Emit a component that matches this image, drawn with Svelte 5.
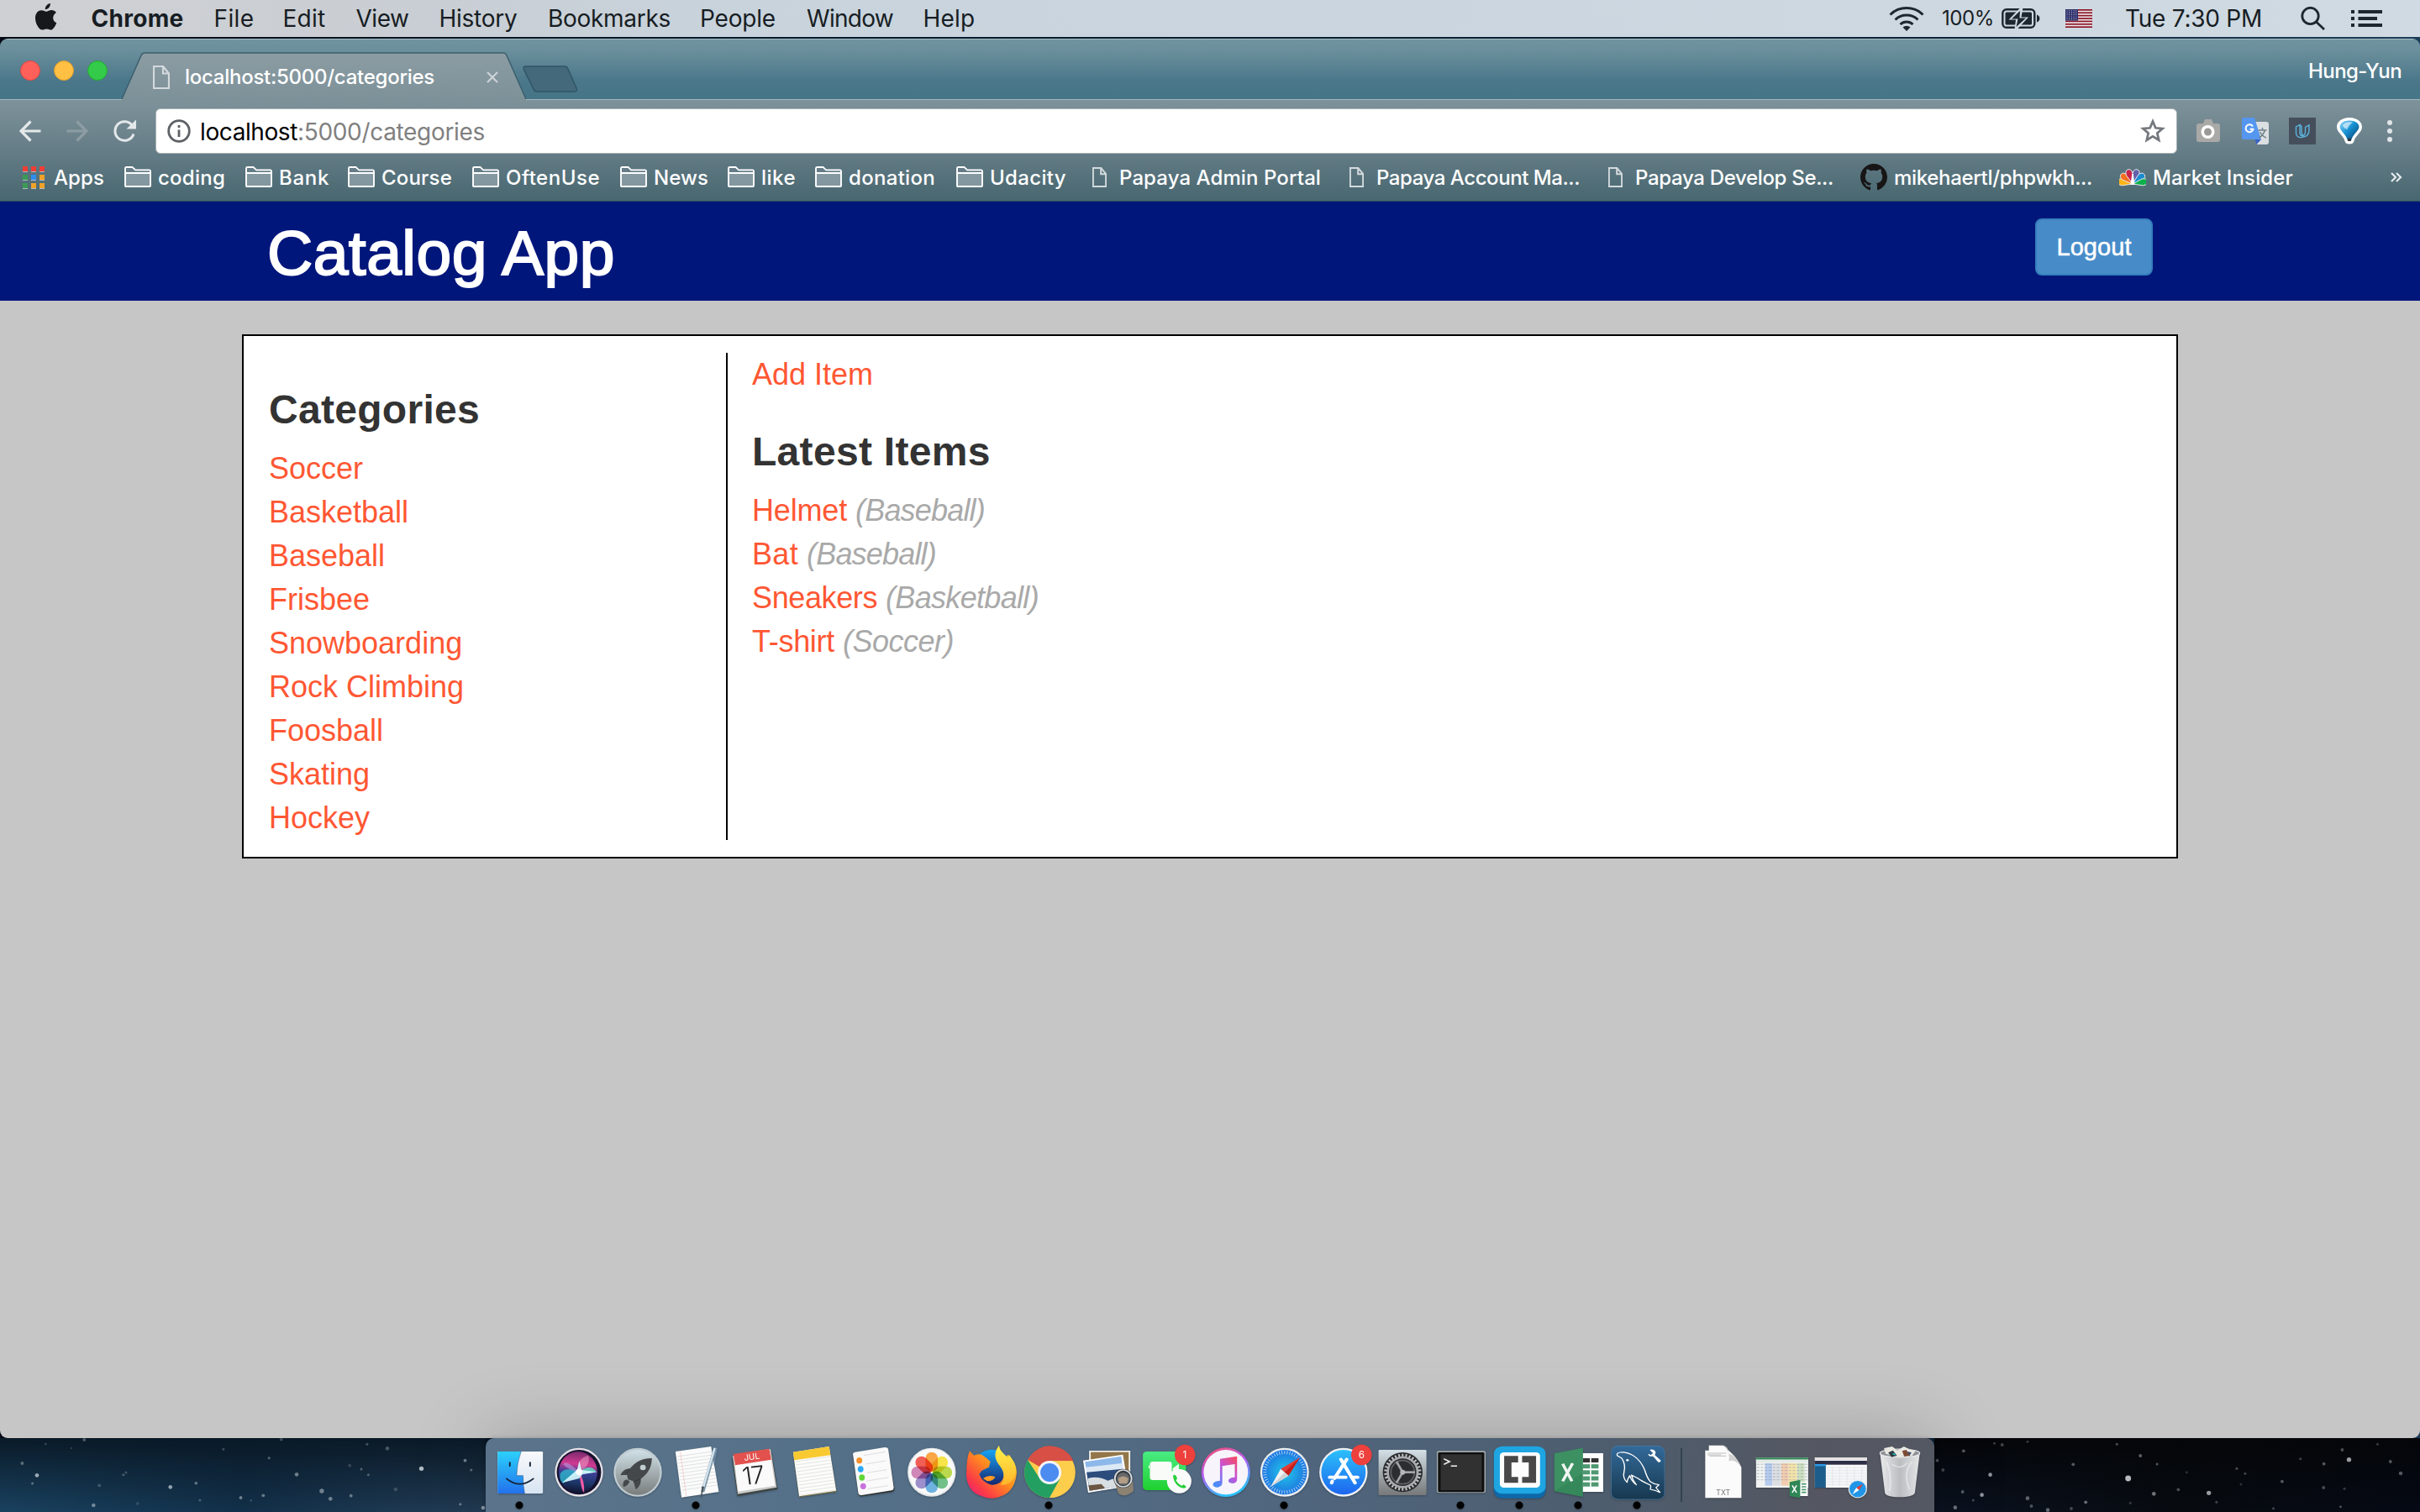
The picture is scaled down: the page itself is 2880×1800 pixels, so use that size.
<script>
  // Tightens or loosens tracking so a label takes exactly the given width.
  function fit(node, width) {
    const natural = node.getBoundingClientRect().width;
    const count = node.textContent.length;
    node.style.letterSpacing = (width - natural) / count + 'px';
  }

  const menus = [
    { label: 'File', fit: 48, slot: 82 },
    { label: 'Edit', fit: 51, slot: 87 },
    { label: 'View', fit: 63, slot: 99 },
    { label: 'History', fit: 93, slot: 129.5 },
    { label: 'Bookmarks', fit: 146, slot: 181 },
    { label: 'People', fit: 90, slot: 127 },
    { label: 'Window', fit: 103, slot: 138.5 },
    { label: 'Help', fit: 62, slot: 80 }
  ];

  const bookmarks = [
    { kind: 'apps', label: 'Apps', fit: 60, slot: 124 },
    { kind: 'folder', label: 'coding', fit: 80, slot: 144 },
    { kind: 'folder', label: 'Bank', fit: 60, slot: 122 },
    { kind: 'folder', label: 'Course', fit: 84, slot: 148 },
    { kind: 'folder', label: 'OftenUse', fit: 112, slot: 176 },
    { kind: 'folder', label: 'News', fit: 65, slot: 128 },
    { kind: 'folder', label: 'like', fit: 41, slot: 104 },
    { kind: 'folder', label: 'donation', fit: 103, slot: 168 },
    { kind: 'folder', label: 'Udacity', fit: 91, slot: 154 },
    { kind: 'doc', label: 'Papaya Admin Portal', fit: 240, slot: 306 },
    { kind: 'doc', label: 'Papaya Account Ma...', fit: 242, slot: 308 },
    { kind: 'doc', label: 'Papaya Develop Se...', fit: 236, slot: 308 },
    { kind: 'github', label: 'mikehaertl/phpwkh...', fit: 236, slot: 308 },
    { kind: 'nbc', label: 'Market Insider', fit: 167, slot: 220 }
  ];

  const categories = ['Soccer', 'Basketball', 'Baseball', 'Frisbee', 'Snowboarding', 'Rock Climbing', 'Foosball', 'Skating', 'Hockey'];
  const items = [
    { name: 'Helmet', nameFit: 113, category: 'Baseball', fit: 154 },
    { name: 'Bat', nameFit: 55, category: 'Baseball', fit: 154 },
    { name: 'Sneakers', nameFit: 149, category: 'Basketball', fit: 182 },
    { name: 'T-shirt', nameFit: 98, category: 'Soccer', fit: 132 }
  ];

  const leftStars = [
    [69, 306, 5, 0.4], [115, 349, 6, 0.75], [101, 378, 4, 0.4], [142, 237, 4, 0.2], [262, 222, 5, 0.35], [222, 252, 3, 0.2],
    [291, 456, 6, 0.5], [309, 385, 5, 0.25], [384, 347, 4, 0.3], [392, 339, 4, 0.25], [530, 391, 6, 0.7], [610, 377, 5, 0.4],
    [622, 438, 4, 0.3], [695, 256, 4, 0.25], [749, 429, 5, 0.5], [781, 439, 3, 0.3], [819, 421, 5, 0.45], [837, 287, 4, 0.4],
    [875, 221, 5, 0.25], [923, 346, 6, 0.5], [1001, 405, 7, 0.5], [1028, 433, 6, 0.5], [1092, 422, 5, 0.45], [1088, 314, 5, 0.2],
    [1124, 327, 4, 0.35], [1146, 347, 4, 0.35], [1142, 238, 4, 0.3], [1205, 253, 6, 0.3], [1231, 399, 6, 0.2], [1311, 325, 7, 0.85],
    [1447, 296, 5, 0.5], [1466, 330, 4, 0.4], [1432, 452, 4, 0.45], [1503, 465, 6, 0.6], [428, 450, 5, 0.15]
  ];
  const rightStars = [
    [66, 296, 5, 0.35], [84, 330, 5, 0.3], [148, 262, 5, 0.4], [244, 235, 4, 0.25], [268, 240, 5, 0.3], [347, 229, 4, 0.25],
    [231, 347, 6, 0.7], [205, 419, 6, 0.7], [145, 408, 5, 0.4], [178, 438, 4, 0.3], [122, 464, 6, 0.5], [347, 431, 6, 0.45],
    [359, 459, 5, 0.35], [410, 473, 6, 0.45], [489, 310, 5, 0.4], [528, 445, 5, 0.5], [483, 468, 5, 0.3], [625, 238, 4, 0.35],
    [660, 360, 9, 0.9], [698, 279, 5, 0.45], [750, 309, 4, 0.4], [740, 415, 6, 0.55], [816, 400, 5, 0.35], [842, 338, 4, 0.2],
    [911, 412, 7, 0.75], [935, 445, 4, 0.3], [998, 325, 4, 0.35], [1024, 343, 4, 0.3], [1011, 381, 4, 0.2], [1139, 371, 5, 0.4],
    [1112, 467, 4, 0.3], [1196, 290, 4, 0.3], [1269, 308, 5, 0.4], [1268, 393, 5, 0.35], [1326, 258, 5, 0.35], [1347, 293, 7, 0.75],
    [1333, 397, 4, 0.25], [1321, 461, 4, 0.35], [1436, 238, 4, 0.25], [1476, 300, 5, 0.4], [1508, 342, 6, 0.4], [667, 448, 4, 0.25]
  ];

  const petals = ['#f79a2c', '#f5e12e', '#b3d334', '#5cb878', '#5aa7dc', '#8f7fc4', '#c978ae', '#f0483e'];
  const ticks = Array.from({ length: 48 }, (_, i) => i * 7.5);
  const teeth = Array.from({ length: 30 }, (_, i) => i * 12);
  const rules = Array.from({ length: 11 }, (_, i) => i * 12);
</script>

{#snippet docIcon(cls)}
  <svg class={cls} viewBox="0 0 20 28"><path d="M1 1H12L19 9.500V27H1Z M12 1V9.500H19" /></svg>
{/snippet}

<div class="screen">
  <header class="menubar">
    <svg class="apple" viewBox="0 0 26 32">
      <path d="M17.900 0C18.200 3.800 15 7.400 11.800 7.200 11.400 3.700 14.700.400 17.900 0ZM25.300 23.300C23.500 27.800 21 31.600 18.600 31.600 16.800 31.600 16 30.500 13.500 30.500 11 30.500 10 31.600 8.500 31.600 4.500 31.600 0 24 0 17.400 0 11.400 3.800 8.200 7.400 8.200 9.800 8.200 11.500 9.700 13.200 9.700 14.700 9.700 16.800 8 19.600 8 21.200 8 23.500 8.900 24.900 10.900 19.600 14.200 20.300 21.100 25.300 23.300Z" />
    </svg>
    <div class="appname"><b use:fit={110}>Chrome</b></div>
    {#each menus as m}
      <div class="menu" style:width="{m.slot}px"><span use:fit={m.fit}>{m.label}</span></div>
    {/each}
    <div class="status">
      <svg class="wifi" viewBox="0 0 42 30">
        <g fill="none" stroke="#1c2730" stroke-width="3">
          <path d="M1.500 10.500A28 28 0 0 1 40.500 10.500" /><path d="M7.500 16.500A19.500 19.500 0 0 1 34.500 16.500" /><path d="M13.500 22A11 11 0 0 1 28.500 22" />
        </g>
        <path d="M16.500 25.500A6.500 6.500 0 0 1 25.500 25.500L21 30Z" />
      </svg>
      <div class="percent"><span use:fit={62}>100%</span></div>
      <svg class="battery" viewBox="0 0 46 26">
        <rect x="1.300" y="2.300" width="38" height="21.500" rx="4.500" fill="none" stroke="#1c2730" stroke-width="2.400" />
        <rect x="4.500" y="5.500" width="31.500" height="15" rx="1.500" />
        <path d="M42 8.500C46.500 10 46.500 16 42 17.500Z" />
        <path d="M22.500 0L8.500 14.500H17L15.500 26H18.500L32 11.500H23.500L25.500 0Z" fill="#cfd9e2" />
        <path d="M22 4L12 13.500H19.500L17.500 23L29 12.500H21.500Z" />
      </svg>
      <svg class="flag" viewBox="0 0 32 22">
        <rect width="32" height="22" fill="#e8e8ea" />
        {#each [0, 1, 2, 3, 4, 5, 6] as s}<rect y={s * 3.385} width="32" height="1.700" fill="#8d1426" />{/each}
        <rect width="15" height="13.500" fill="#2c2f69" />
        {#each [0, 1, 2, 3, 4] as r}{#each [0, 1, 2, 3, 4] as c}<circle cx={2 + c * 2.700} cy={1.800 + r * 2.400} r="0.600" fill="#c9cbe4" />{/each}{/each}
      </svg>
      <div class="clock"><span use:fit={163}>Tue 7:30 PM</span></div>
      <svg class="search" viewBox="0 0 30 28"><circle cx="11.500" cy="11" r="9.700" /><path d="M18.500 18L28 27" /></svg>
      <svg class="list" viewBox="0 0 37 20">
        <path d="M0 0H4V4H0ZM8.500 0H37V4H8.500ZM0 8H4V12H0ZM8.500 8H31V12H8.500ZM0 16H4V20H0ZM8.500 16H37V20H8.500Z" />
      </svg>
    </div>
  </header>

  <div class="window">
    <div class="tabstrip">
      <div class="lights"><i class="red"></i><i class="yellow"></i><i class="green"></i></div>
      <div class="tab">
        <svg class="tabshape" viewBox="0 0 484 57" preserveAspectRatio="none">
          <defs>
            <linearGradient id="tabfill" x1="0" y1="0" x2="0" y2="1"><stop offset="0" stop-color="#8c9ca3" /><stop offset="1" stop-color="#7d9199" /></linearGradient>
          </defs>
          <path d="M1 57L24 4Q25.500 1 28 1H455Q458 1 459 4L482 57Z" fill="url(#tabfill)" />
          <path d="M1 56L24 4Q25.500 1 28 1H455Q458 1 459 4L482 56" fill="none" stroke="#3b5f6e" stroke-width="1.500" />
        </svg>
        {@render docIcon('tabdoc')}
        <div class="tabtitle"><span use:fit={297}>localhost:5000/categories</span></div>
        <svg class="close" viewBox="0 0 14 14"><path d="M1 1L13 13M13 1L1 13" /></svg>
      </div>
      <svg class="newtab" viewBox="0 0 66 32">
        <path d="M4 1H50Q53 1 54 4L64 27Q65.500 31 62 31H17Q14 31 13 28L1.500 5Q0 1 4 1Z" fill="#44697a" stroke="#2f5566" stroke-width="1.500" />
      </svg>
      <div class="profile"><span use:fit={111}>Hung-Yun</span></div>
    </div>

    <div class="toolbar">
      <div class="navrow">
        <svg class="nav" viewBox="0 0 26 26"><path d="M25.500 13H2M13.500 1.500L2 13L13.500 24.500" /></svg>
        <svg class="nav dim" viewBox="0 0 26 26"><path d="M.500 13H24M12.500 1.500L24 13L12.500 24.500" /></svg>
        <svg class="reload" viewBox="0 0 28 28"><path d="M23.500 7.500A11.300 11.300 0 1 0 25 17.500" fill="none" stroke="#e4e8ea" stroke-width="3" /><path d="M28 .500V11.500H16.500Z" fill="#e4e8ea" /></svg>
        <div class="omnibox">
          <svg class="info" viewBox="0 0 28 28"><circle cx="14" cy="14" r="12.300" /><path d="M14 12.500V21M14 7V10" /></svg>
          <div class="url"><span use:fit={116}>localhost</span><span class="path" use:fit={223}>:5000/categories</span></div>
          <svg class="star" viewBox="0 0 30 29"><path d="M15 3.500L18.300 11.300L26.600 12L20.300 17.500L22.200 25.700L15 21.300L7.800 25.700L9.700 17.500L3.400 12L11.700 11.300Z" /></svg>
        </div>
        <svg class="camera" viewBox="0 0 30 28">
          <path d="M9 5L11 0H19L21 5H26Q29 5 29 8V24Q29 27 26 27H4Q1 27 1 24V8Q1 5 4 5Z" fill="#a9a9a7" />
          <circle cx="14.500" cy="15" r="8" fill="#fff" /><circle cx="14.500" cy="15" r="4.500" fill="#9a9a98" />
        </svg>
        <svg class="ext" viewBox="0 0 32 32">
          <path d="M14 5H29Q32 5 32 8V29Q32 32 29 32H18Z" fill="#dcdfe2" />
          <path d="M0 2Q0 0 2 0H15L23 26H2Q0 26 0 24Z" fill="#5596ef" />
          <path d="M15.500 26H23L17.500 32Z" fill="#3b62c0" />
          <path d="M13 10.500A4.500 4.500 0 1 0 13.500 13.800H9.500" fill="none" stroke="#fff" stroke-width="2" />
          <path d="M19.500 15H29.500M24.500 12V15M27.500 15Q25.500 21 20.500 24M21.500 17Q24 22 29 24" fill="none" stroke="#6f8088" stroke-width="1.500" />
        </svg>
        <svg class="ext" viewBox="0 0 32 32">
          <rect width="32" height="32" fill="#454f5b" />
          <path d="M13 8.500L8.500 11V18.500C8.500 22 11.500 24 15 23.500C21.500 23 24 19 24 15V9L19.500 11.500V17C19.500 20 18 21.500 16 21.500C14 21.500 13 20 13 18ZM17 22C15 20.500 15 19 15 16V10.500L13 8.500" fill="none" stroke="#5db3dc" stroke-width="1.400" />
        </svg>
        <svg class="balloon" viewBox="0 0 32 32">
          <defs><linearGradient id="bal" x1="0" y1="0" x2="1" y2="1"><stop offset="0" stop-color="#9adcfa" /><stop offset=".45" stop-color="#1791d4" /><stop offset="1" stop-color="#073c66" /></linearGradient></defs>
          <path d="M16 0C25 0 31 5 31 11C31 18 23 21 21.500 28Q20.500 31.500 16 31.500Q11.500 31.500 10.500 28C9 21 1 18 1 11C1 5 7 0 16 0Z" fill="#fff" />
          <path d="M16 3.500C23 3.500 27.500 7 27.500 11C27 16.500 20 19.500 18 27.500H14C12 19.500 5 16.500 4.500 11C4.500 7 9 3.500 16 3.500Z" fill="url(#bal)" />
          <path d="M8 9Q12 4 20 5.500Q15 9 13.500 14Q9 13 8 9Z" fill="#fff" opacity=".6" />
          <rect x="14" y="24.500" width="4" height="3.500" fill="#2a3b45" />
        </svg>
        <svg class="dots" viewBox="0 0 6 26"><circle cx="3" cy="3" r="3" /><circle cx="3" cy="13" r="3" /><circle cx="3" cy="23" r="3" /></svg>
      </div>

      <div class="bookmarks">
        {#each bookmarks as b}
          <div class="bookmark" style:width="{b.slot}px">
            {#if b.kind === 'apps'}
              <svg viewBox="0 0 32 32">
                {#each ['#ef3e36', '#ef3e36', '#ef3e36', '#3b9a55', '#2f8cf0', '#f0a228', '#3b9a55', '#f0a228', '#f0a228'] as c, i}
                  <rect x={3 + (i % 3) * 10} y={3 + Math.floor(i / 3) * 10} width="6" height="6" fill={c} />
                  <rect x={3 + (i % 3) * 10} y={9 + Math.floor(i / 3) * 10} width="6" height="0.900" fill="#b9c5c9" />
                {/each}
              </svg>
            {:else if b.kind === 'folder'}
              <svg viewBox="0 0 32 32"><path d="M1 26V5.500Q1 4 2.500 4H9.500L13 7.500H29.500Q31 7.500 31 9V26Q31 27 30 27H2Q1 27 1 26ZM1 11H31" fill="rgba(180,192,200,.5)" stroke="#fff" stroke-width="1.900" /><path d="M2 5H9L13 8.500H30V10H2Z" fill="#667d88" /></svg>
            {:else if b.kind === 'doc'}
              <div class="docbox">{@render docIcon('smalldoc')}</div>
            {:else if b.kind === 'github'}
              <svg viewBox="0 0 16 16"><path fill="#171515" d="M8 0C3.580 0 0 3.580 0 8c0 3.540 2.290 6.530 5.470 7.590.400.070.550-.170.550-.380 0-.190-.010-.820-.010-1.490-2.010.370-2.530-.490-2.690-.940-.090-.230-.480-.940-.820-1.130-.280-.150-.680-.520-.010-.530.630-.010 1.080.580 1.230.820.720 1.210 1.870.870 2.330.660.070-.520.280-.870.510-1.070-1.780-.200-3.640-.890-3.640-3.950 0-.870.310-1.590.820-2.150-.080-.200-.360-1.020.080-2.120 0 0 .670-.210 2.200.820.640-.180 1.320-.270 2-.270s1.360.090 2 .270c1.530-1.040 2.200-.820 2.200-.820.440 1.100.160 1.920.080 2.120.510.560.820 1.270.820 2.150 0 3.070-1.870 3.750-3.650 3.950.290.250.540.730.540 1.480 0 1.070-.010 1.930-.010 2.200 0 .210.150.460.550.380A8.010 8.010 0 0 0 16 8c0-4.420-3.580-8-8-8Z" /></svg>
            {:else}
              <svg viewBox="0 0 32 32">
                {#each [['#fbb515', -80], ['#f36f21', -50], ['#c8234a', -18], ['#6560aa', 18], ['#1c8bd0', 50], ['#0db14b', 80]] as [c, a]}
                  <path d="M16 24L12 12Q12 6 16 6Q20 6 20 12Z" fill={c} stroke="#e8eef0" stroke-width=".9" transform="rotate({a} 16 24)" />
                {/each}
                <path d="M15.200 12L13.500 25H18.500L16.800 12Z" fill="#fff" />
              </svg>
            {/if}
            <span use:fit={b.fit}>{b.label}</span>
          </div>
        {/each}
        <svg class="more" viewBox="0 0 14 12"><path d="M1 1L6 6L1 11M7 1L12 6L7 11" /></svg>
      </div>
    </div>

    <div class="page">
      <div class="pagehead">
        <h1><span use:fit={414}>Catalog App</span></h1>
        <button><span use:fit={89}>Logout</span></button>
      </div>
      <div class="panel">
        <section class="left">
          <h2>Categories</h2>
          {#each categories as c}<a class="row">{c}</a>{/each}
        </section>
        <section class="right">
          <a class="row">Add Item</a>
          <h2>Latest Items</h2>
          {#each items as it}
            <div class="row item"><a use:fit={it.nameFit}>{it.name}</a><em use:fit={it.fit}>({it.category})</em></div>
          {/each}
        </section>
      </div>
    </div>
  </div>

  <footer class="desktop">
    <svg class="sky skyleft" viewBox="0 216 1511 264" preserveAspectRatio="none">
      {#each leftStars as [x, y, r, o]}<ellipse cx={x} cy={y} rx={r} ry={r * 1.150} fill="#cdd6dc" opacity={o} />{/each}
    </svg>
    <div class="dock">
      <svg class="ic run" viewBox="36.600 51 182.930 216" preserveAspectRatio="none">
        <defs>
          <linearGradient id="fb" x1="0" y1="0" x2="0" y2="1"><stop offset="0" stop-color="#2bd0fb" /><stop offset="1" stop-color="#2371ec" /></linearGradient>
          <linearGradient id="fw" x1="0" y1="0" x2="0" y2="1"><stop offset="0" stop-color="#f8f9fb" /><stop offset="1" stop-color="#d8e4f2" /></linearGradient>
        </defs>
        <rect x="58" y="84" width="141" height="150" rx="4" fill="url(#fw)" />
        <path d="M62 84H131Q118 125 117 170H137Q137 205 142 234H62Q58 234 58 230V88Q58 84 62 84Z" fill="url(#fb)" />
        <path d="M131 84Q118 125 117 170H137Q137 205 142 234" fill="none" stroke="#1b4d86" stroke-width="1.500" />
        <path d="M96 123V136M159 123V136M86 181Q127 219 169 181" fill="none" stroke="#14243a" stroke-width="5" stroke-linecap="round" />
      </svg>
      <svg class="ic" viewBox="219.500 51 182.930 216" preserveAspectRatio="none">
        <defs><linearGradient id="si" x1=".5" y1="0" x2=".4" y2="1"><stop offset="0" stop-color="#7b2a6e" /><stop offset=".3" stop-color="#d03a90" /><stop offset=".5" stop-color="#3b3f94" /><stop offset=".75" stop-color="#1c3668" /><stop offset="1" stop-color="#12132e" /></linearGradient></defs>
        <ellipse cx="311" cy="158" rx="75" ry="87" fill="#e6e2e8" /><ellipse cx="311" cy="158" rx="69" ry="80" fill="#15122e" /><ellipse cx="308" cy="158" rx="60" ry="74" fill="url(#si)" />
        <path d="M312 158Q265 135 252 165Q250 190 262 197Z" fill="#2fc6d6" opacity=".7" /><path d="M312 158Q345 125 366 157Q345 165 312 158Z" fill="#5ef0c8" opacity=".75" />
        <path d="M312 158Q300 110 340 98Q350 130 312 158Z" fill="#f7a2c9" opacity=".5" /><path d="M312 158Q270 110 262 130Q275 150 312 158Z" fill="#bcaaf0" opacity=".5" />
        <path d="M312 158Q330 190 327 230Q318 225 312 158Z" fill="#f05aa4" /><path d="M258 196L305 150L312 118L319 150L366 157L322 166L312 180Z" fill="#d8fbff" opacity=".9" /><ellipse cx="311" cy="157" rx="10" ry="11" fill="#fff" />
      </svg>
      <svg class="ic" viewBox="402.500 51 182.930 216" preserveAspectRatio="none">
        <defs><linearGradient id="rk" x1="0" y1="0" x2="0" y2="1"><stop offset="0" stop-color="#cfe0e6" /><stop offset="1" stop-color="#7a7d7c" /></linearGradient></defs>
        <ellipse cx="494" cy="158" rx="75" ry="87" fill="#c0ccd2" /><ellipse cx="494" cy="159" rx="69" ry="80" fill="url(#rk)" />
        <path d="M538 108C512 108 488 118 470 145C456 145 446 153 440 169L460 167L464 184L480 190L488 220C500 208 505 196 503 182C525 164 537 142 538 108Z" fill="#44484a" />
        <ellipse cx="510" cy="141" rx="9" ry="10" fill="#c1cdd0" /><path d="M460 184Q445 188 449 210Q462 208 469 191Z" fill="#44484a" /><path d="M470 145L455 168M503 182L480 192" stroke="#2e3234" stroke-width="2" />
      </svg>
      <svg class="ic run" viewBox="585.400 51 182.930 216" preserveAspectRatio="none">
        <path d="M611 84L722 66L746 228L630 248Z" fill="#fbfbfb" />
        <g stroke="#c6cacd" stroke-width="1.500">{#each rules as r}<path d="M{615 + r * 0.130} {102 + r}L{726 + r * 0.130} {84 + r}" />{/each}</g>
        <path d="M626 83L645 245" stroke="#f0b5b0" stroke-width="1.500" /><path d="M735 70L696 228" stroke="#7f97a8" stroke-width="11" /><path d="M733 72L696 220" stroke="#d5e6f0" stroke-width="6" /><path d="M701 210L692 247L690 246L693 208Z" fill="#4b545b" />
        <path d="M740 72L731 130" stroke="#6d8fae" stroke-width="3" />
      </svg>
      <svg class="ic" viewBox="768.300 51 182.930 216" preserveAspectRatio="none">
        <path d="M787 108L909 80L929 218L804 244Z" fill="#3d4443" /><path d="M789 100L907 76L926 212L805 236Z" fill="#c9cbc8" /><path d="M792 95L904 75L921 206L806 227Z" fill="#fafafa" /><path d="M791 93L903 74L909 113L797 133Z" fill="#e2514d" />
        <g transform="translate(850 113) rotate(-9) scale(.87 1)"><text text-anchor="middle" font-size="30" fill="#fff" class="lbl">JUL</text></g>
        <g transform="translate(858 200) rotate(-7) scale(.87 1)"><text text-anchor="middle" font-size="88" fill="#222" class="thin" textLength="80">17</text></g>
      </svg>
      <svg class="ic" viewBox="951.300 51 182.930 216" preserveAspectRatio="none">
        <path d="M977 88L1089 68L1112 228L996 247Z" fill="#7b7040" /><path d="M977 86L1089 66L1111 224L996 244Z" fill="#fcfcfa" />
        <g stroke="#cfcfcc" stroke-width="1.500">{#each rules as r}<path d="M{984 + r * 0.130} {120 + r}L{1093 + r * 0.130} {102 + r}" />{/each}</g>
        <path d="M977 86L1089 66L1093 97L981 115Z" fill="#f8c931" />
      </svg>
      <svg class="ic" viewBox="1134.200 51 182.930 216" preserveAspectRatio="none">
        <path d="M1163 98Q1163 91 1170 90L1262 73Q1271 73 1273 80L1292 216Q1292 226 1285 228L1192 244Q1184 245 1180 238Z" fill="#2f3434" /><path d="M1163 94Q1163 87 1170 86L1262 69Q1271 69 1273 76L1290 212Q1290 221 1283 223L1190 240Q1182 241 1180 234Z" fill="#fafafa" />
        <ellipse cx="1183" cy="116" rx="9" ry="11" fill="#f7902b" /><ellipse cx="1187" cy="147" rx="9" ry="11" fill="#2aa9f2" /><ellipse cx="1191" cy="177" rx="9" ry="11" fill="#60d637" /><ellipse cx="1195" cy="208" rx="9" ry="11" fill="#c873de" />
        <path d="M1197 98L1264 85M1202 129L1266 117M1206 160L1268 149M1206 189L1272 177M1209 217L1272 206" stroke="#d2d2d2" stroke-width="2" />
      </svg>
      <svg class="ic" viewBox="1317.100 51 182.930 216" preserveAspectRatio="none">
        <ellipse cx="1408" cy="158" rx="75" ry="87" fill="#e6e8ea" /><ellipse cx="1408" cy="157" rx="71" ry="82" fill="#f9f9f9" />
        <g transform="translate(1408 159) scale(.871 1)" class="petals">{#each petals as p, i}<rect x="-22" y="-73" width="44" height="70" rx="22" fill={p} opacity=".88" transform="rotate({i * 45})" />{/each}</g>
      </svg>
      <svg class="ic" viewBox="-15.700 51 182.930 216" preserveAspectRatio="none">
        <defs>
          <linearGradient id="ff" x1="1" y1="0" x2="0" y2="1"><stop offset="0" stop-color="#ffe23a" /><stop offset=".45" stop-color="#ff8a1f" /><stop offset=".75" stop-color="#fb3b46" /><stop offset="1" stop-color="#e3178a" /></linearGradient>
          <linearGradient id="fg" x1="0" y1="0" x2="0" y2="1"><stop offset="0" stop-color="#16a4f5" /><stop offset="1" stop-color="#16276f" /></linearGradient>
          <linearGradient id="fy" x1="0" y1="0" x2="0" y2="1"><stop offset="0" stop-color="#fff24a" /><stop offset="1" stop-color="#ffb52a" /></linearGradient>
        </defs>
        <ellipse cx="80" cy="140" rx="58" ry="63" fill="url(#fg)" />
        <path d="M10 82L24 98Q40 90 52 98Q58 102 75 120L70 140L48 152L40 165Q50 195 80 204Q110 202 116 175Q120 150 108 120L130 95Q160 130 156 165Q148 245 80 251Q5 245 0 170Q0 110 10 82Z" fill="url(#ff)" />
        <path d="M102 62C82 90 90 115 104 135C122 160 118 188 106 204C140 205 156 175 154 145C152 120 140 110 134 96L130 108C120 92 104 85 102 62Z" fill="url(#fy)" />
        <path d="M52 180Q70 165 90 175Q85 190 65 190Z" fill="#ff9a22" />
      </svg>
      <svg class="ic run" viewBox="167.200 51 182.930 216" preserveAspectRatio="none">
        <g transform="translate(259 159) scale(.871 1)">
          <circle r="90" fill="#fdce4c" /><path d="M0 0L-78-45A90 90 0 0 1 85-41H0Z" fill="#d84f45" /><path d="M-78-45A90 90 0 0 0 0 90L42 24L-36 20Z" fill="#23a061" /><path d="M0-41H82A90 90 0 0 1 0 90L38 20Z" fill="#fdcd4c" /><circle r="42" fill="#f3f5f7" /><circle r="33" fill="#4c8bf0" />
        </g>
      </svg>
      <svg class="ic" viewBox="350.200 51 182.930 216" preserveAspectRatio="none">
        <rect x="382" y="81" width="128" height="128" fill="#f4f2ea" /><rect x="387" y="86" width="118" height="118" fill="#93774a" />
        <path d="M363 116L487 95L503 208L379 231Z" fill="#fff" /><path d="M369 121L482 101L486 146L375 160Z" fill="#8db8ea" /><path d="M371 140L484 126L486 150L375 166Z" fill="#dce9f5" /><path d="M374 158L487 146L496 205L383 224Z" fill="#2c4c7c" /><path d="M378 180Q410 170 440 188Q465 175 492 185L496 205L383 224Z" fill="#d8dee2" /><path d="M380 205L420 200L432 215L383 224Z" fill="#6b5744" />
        <path d="M458 185L518 188L520 225Q495 250 474 235Z" fill="#8d8271" /><ellipse cx="488" cy="180" rx="30" ry="34" fill="#30363c" /><ellipse cx="488" cy="180" rx="26" ry="30" fill="none" stroke="#d7dce0" stroke-width="5" /><ellipse cx="488" cy="182" rx="20" ry="23" fill="#66696a" /><path d="M472 180Q488 165 504 180L500 198H476Z" fill="#b29d85" />
      </svg>
      <svg class="ic" viewBox="533.100 51 182.930 216" preserveAspectRatio="none">
        <defs><linearGradient id="ft" x1="0" y1="0" x2="0" y2="1"><stop offset="0" stop-color="#49ec83" /><stop offset="1" stop-color="#1fd02f" /></linearGradient></defs>
        <rect x="549" y="84" width="134" height="138" rx="12" fill="url(#ft)" /><rect x="571" y="120" width="68" height="66" rx="9" fill="#f8fbf8" /><path d="M642 144L661 128V170L642 158Z" fill="#f1faf1" /><rect x="567" y="134" width="3" height="10" fill="#fff" />
        <ellipse cx="662" cy="190" rx="38" ry="43" fill="#fafafa" /><path d="M643 170Q647 165 652 170L656 180L652 187Q660 202 670 206L676 202L684 209Q684 214 677 215C660 214 644 194 643 170Z" fill="#27cf3c" />
        <ellipse cx="680" cy="96" rx="32" ry="37" fill="#ee403c" /><g transform="translate(679 108) scale(.87 1)"><text text-anchor="middle" font-size="35" fill="#fff" class="lbl">1</text></g>
      </svg>
      <svg class="ic" viewBox="716 51 182.930 216" preserveAspectRatio="none">
        <defs><linearGradient id="it" x1="0" y1="0" x2=".4" y2="1"><stop offset="0" stop-color="#fb4f62" /><stop offset=".5" stop-color="#b45af2" /><stop offset="1" stop-color="#2cc1fb" /></linearGradient><linearGradient id="nt" x1="1" y1="0" x2=".3" y2="1"><stop offset="0" stop-color="#fb4a5a" /><stop offset=".5" stop-color="#c552d8" /><stop offset="1" stop-color="#4c8cf8" /></linearGradient></defs>
        <ellipse cx="807" cy="158" rx="76" ry="88" fill="url(#it)" /><ellipse cx="807" cy="158" rx="69" ry="80" fill="#f7f5fb" />
        <path d="M789 110L842 101V182Q842 196 828 198Q814 197 815 187Q817 177 835 176V129L796 136V196Q796 209 782 212Q766 211 767 200Q769 189 789 188Z" fill="url(#nt)" />
      </svg>
      <svg class="ic run" viewBox="899 51 182.930 216" preserveAspectRatio="none">
        <defs><radialGradient id="sf"><stop offset="0" stop-color="#22c8ea" /><stop offset="1" stop-color="#1d74e0" /></radialGradient></defs>
        <g transform="translate(990 158) scale(.871 1)">
          <circle r="87" fill="#eceff1" /><circle r="80" fill="url(#sf)" />
          {#each ticks as t}<path d="M0-77V-65" stroke="#e8f7ff" stroke-width="2" transform="rotate({t})" />{/each}
          <path d="M54-52L-14-12L14 12Z" fill="#e33b35" /><path d="M-14-12L14 12L-50 52Z" fill="#f2f2f2" /><path d="M54-52L0 0L14 12Z" fill="#c41e1c" /><path d="M0 0L14 12L-50 52Z" fill="#cfd2d4" />
        </g>
      </svg>
      <svg class="ic" viewBox="1081.900 51 182.930 216" preserveAspectRatio="none">
        <defs><linearGradient id="as" x1="0" y1="0" x2="0" y2="1"><stop offset="0" stop-color="#2cc0fb" /><stop offset="1" stop-color="#1d66ee" /></linearGradient></defs>
        <ellipse cx="1173" cy="158" rx="75" ry="87" fill="#eef1f3" /><ellipse cx="1173" cy="158" rx="69" ry="80" fill="url(#as)" />
        <path d="M1183 112L1145 180M1138 190L1136 196M1165 112L1209 196M1130 176H1180M1198 176H1217" stroke="#fff" stroke-width="11" stroke-linecap="round" />
        <ellipse cx="1229" cy="96" rx="32" ry="37" fill="#ee403c" /><g transform="translate(1229 108) scale(.87 1)"><text text-anchor="middle" font-size="35" fill="#fff" class="lbl">6</text></g>
      </svg>
      <svg class="ic" viewBox="1264.800 51 182.930 216" preserveAspectRatio="none">
        <defs><linearGradient id="sp" x1="0" y1="0" x2="0" y2="1"><stop offset="0" stop-color="#d3e0e6" /><stop offset="1" stop-color="#767879" /></linearGradient></defs>
        <rect x="1282" y="78" width="149" height="162" rx="4" fill="url(#sp)" />
        <g transform="translate(1357 158) scale(.871 1)">
          <circle r="71" fill="#2b2d2f" />{#each teeth as t}<path d="M-3-66H3V-54H-3Z" fill="#c2c5c7" transform="rotate({t})" />{/each}
          <circle r="53" fill="none" stroke="#a9acae" stroke-width="8" /><circle r="42" fill="none" stroke="#606365" stroke-width="5" />
          {#each [90, 210, 330] as a}<path d="M-4 0H4V-44H-4Z" fill="#a3a6a8" transform="rotate({a})" />{/each}<circle r="9" fill="#b5b8ba" />
        </g>
      </svg>
      <svg class="ic run" viewBox="1447.700 51 182.930 216" preserveAspectRatio="none">
        <rect x="1463" y="82" width="152" height="150" rx="6" fill="#a2a9ab" /><rect x="1467" y="87" width="144" height="142" rx="4" fill="#0f0f0f" /><rect x="1475" y="94" width="128" height="128" fill="#313131" />
        <path d="M1485 110L1503 120L1485 130M1507 136H1526" fill="none" stroke="#f4f4f4" stroke-width="4.500" />
      </svg>
      <svg class="ic run" viewBox="111.300 51 177.030 216" preserveAspectRatio="none">
        <rect x="121" y="75" width="156" height="176" rx="26" fill="#0f68a8" /><rect x="121" y="65" width="156" height="170" rx="26" fill="#1ea5e2" /><rect x="139" y="87" width="121" height="126" rx="12" fill="#fdfdfd" />
        <path d="M152 100H194V123H174V175H194V196H152ZM206 100H248V196H206V175H226V123H206Z" fill="#484848" />
      </svg>
      <svg class="ic run" viewBox="288.300 51 177.030 216" preserveAspectRatio="none">
        <rect x="375" y="90" width="75" height="138" fill="#fff" />
        <g fill="#3f8e63">{#each [0, 1, 2, 3, 4] as r}<rect x="389" y={108 + r * 21.500} width="21" height="15" fill={r ? '#4f9871' : '#333'} /><rect x="414" y={108 + r * 21.500} width="22" height="15" fill={r ? '#4f9871' : '#333'} />{/each}</g>
        <path d="M303 91L389 71V246L303 226Z" fill="#35885a" /><path d="M303 91L389 71V160L303 226Z" fill="#43976a" opacity=".5" />
        <path d="M328 128L356 190M358 126L328 190" stroke="#f0f5f1" stroke-width="9" fill="none" />
      </svg>
      <svg class="ic run" viewBox="465.400 51 177.030 216" preserveAspectRatio="none">
        <defs><linearGradient id="my" x1="0" y1="0" x2="0" y2="1"><stop offset="0" stop-color="#336a9a" /><stop offset="1" stop-color="#17384f" /></linearGradient></defs>
        <rect x="474" y="64" width="161" height="191" rx="22" fill="url(#my)" stroke="#4a7fab" stroke-width="2" />
        <path d="M492 98Q490 88 502 87C530 85 560 105 575 150Q582 178 592 192Q605 202 618 203L609 213L621 230Q608 222 592 219Q595 210 592 204C578 196 566 190 555 180L535 168L540 185L550 203Q535 190 530 170Q522 185 522 194Q508 180 513 155Q518 130 506 108L493 99Z" fill="none" stroke="#fff" stroke-width="3.500" stroke-linejoin="round" />
        <circle cx="523" cy="115" r="4" fill="#fff" /><path d="M590 78Q600 74 606 82Q610 90 605 96L624 116Q622 124 616 122L600 101Q588 104 585 92L594 96L600 90Z" fill="#fff" />
      </svg>
      <div class="divider"></div>
      <svg class="ic" viewBox="723.300 51 177.030 216" preserveAspectRatio="none">
        <path d="M768 62H812L845 100L866 140V250H757V80H768Z" fill="#fbfbfb" /><path d="M812 62Q828 66 826 92Q850 94 866 140Q848 110 828 118Q834 88 812 62Z" fill="#d0d0d0" />
        <path d="M764 90H820M764 96H805M770 100H820" stroke="#aaa" stroke-width="2" />
        <g transform="translate(811 240) scale(.843 1)"><text text-anchor="middle" font-size="26" fill="#777" class="lbl">TXT</text></g>
      </svg>
      <svg class="ic" viewBox="900.300 51 177.030 216" preserveAspectRatio="none">
        <rect x="910" y="106" width="157" height="107" fill="#f1f3f2" /><rect x="910" y="106" width="157" height="7" fill="#2f8656" /><rect x="910" y="113" width="157" height="12" fill="#e4ebe7" />
        <rect x="937" y="126" width="22" height="80" fill="#b5cbee" /><rect x="960" y="126" width="25" height="80" fill="#dcdfe2" /><rect x="986" y="126" width="22" height="80" fill="#f2ccb0" /><rect x="1008" y="126" width="25" height="80" fill="#f5e4a9" /><rect x="1034" y="126" width="22" height="80" fill="#cddfc0" />
        <path d="M912 130H1066M912 141H1066M912 152H1066M912 163H1066M912 174H1066M912 185H1066" stroke="#7f8a9a" stroke-width="2" stroke-dasharray="8 4" opacity=".65" />
        <rect x="1036" y="193" width="30" height="50" fill="#fff" /><path d="M1047 200H1061M1047 210H1061M1047 220H1061M1047 230H1061" stroke="#4f9871" stroke-width="5" /><path d="M1011 193L1043 185V250L1011 243Z" fill="#2f8656" /><path d="M1019 205L1032 231M1032 205L1019 231" stroke="#fff" stroke-width="4" />
      </svg>
      <svg class="ic" viewBox="1077.400 51 177.030 216" preserveAspectRatio="none">
        <rect x="1087" y="105" width="157" height="108" fill="#f6f7f9" /><rect x="1087" y="105" width="157" height="10" fill="#e3e0e0" /><rect x="1087" y="117" width="157" height="14" fill="#2d2f47" /><rect x="1087" y="129" width="33" height="84" fill="#1d5d8c" /><rect x="1087" y="129" width="33" height="7" fill="#2a9be6" />
        <path d="M1124 142H1240M1124 152H1240M1124 162H1240M1124 172H1240M1124 182H1240M1124 192H1240M1124 202H1240M1140 138V208M1162 138V208M1184 138V208M1206 138V208M1228 138V208" stroke="#d6dbe2" stroke-width="1.500" />
        <ellipse cx="1216" cy="218" rx="28" ry="32" fill="#e4eaee" /><ellipse cx="1216" cy="218" rx="25" ry="29" fill="#2196e8" /><path d="M1232 200L1212 213L1220 222Z" fill="#e33b35" /><path d="M1212 213L1220 222L1200 237Z" fill="#fff" />
      </svg>
      <svg class="ic" viewBox="1254.400 51 177.030 216" preserveAspectRatio="none">
        <defs><linearGradient id="tr" x1="0" y1="0" x2="1" y2="0"><stop offset="0" stop-color="#e9ebed" /><stop offset=".5" stop-color="#bcbdc0" /><stop offset="1" stop-color="#e4e6e8" /></linearGradient></defs>
        <path d="M1283 88L1298 232Q1302 247 1342 247Q1382 247 1388 232L1403 88Q1343 115 1283 88Z" fill="url(#tr)" />
        <ellipse cx="1343" cy="90" rx="60" ry="15" fill="#8f9397" stroke="#eceef0" stroke-width="3" />
        <path d="M1300 92L1295 72L1320 66L1335 80L1355 66L1372 76L1390 82L1380 98L1343 106Z" fill="#e9e7e2" /><path d="M1308 88L1322 80L1334 98L1318 104Z" fill="#2e3b3e" /><path d="M1350 82L1362 78L1374 98L1356 102Z" fill="#7b4a35" /><path d="M1318 92L1328 90L1330 98Z" fill="#27c1d4" /><path d="M1366 84L1378 88L1372 98Z" fill="#3b4a68" />
        <path d="M1303 120Q1320 170 1312 225M1380 120Q1350 160 1372 220M1320 130Q1345 150 1365 125" stroke="#f6f6f6" stroke-width="5" fill="none" opacity=".5" />
      </svg>
    </div>
    <svg class="sky skyright" viewBox="57 216 1511 264" preserveAspectRatio="none">
      {#each rightStars as [x, y, r, o]}<ellipse cx={x} cy={y} rx={r} ry={r * 1.150} fill="#c9ced4" opacity={o} />{/each}
    </svg>
  </footer>
</div>

<style>
  :global(body) { margin: 0; background: #050a14; }
  .screen { width: 2880px; height: 1800px; overflow: hidden; display: flex; flex-direction: column; font-family: Inter, "Liberation Sans", sans-serif; background: linear-gradient(90deg, #050a14, #06192c 30%, #0c2438 80%, #1a3d58); }
  svg { display: block; flex: none; }
  span, b { white-space: pre; display: inline-block; flex: none; }

  .menubar { height: 44px; flex: none; margin-bottom: 2px; display: flex; align-items: center; background: linear-gradient(90deg, #cfd0d3 0, #c9ced4 18%, #c8d3dc 30%, #cbd5df 55%, #d0dae2 100%); color: #171d23; font-size: 28px; line-height: 44px; }
  .apple { width: 26px; height: 32px; margin: -4px 0 0 42px; fill: #17181b; }
  .appname { width: 146px; margin-left: 40.500px; flex: none; }
  .menu { flex: none; }
  .status { margin-left: auto; padding-right: 45px; display: flex; align-items: center; fill: #1c2730; }
  .wifi { width: 42px; height: 30px; }
  .percent { width: 66px; margin-left: 21px; font-size: 24px; }
  .battery { width: 46px; height: 26px; margin-left: 5px; }
  .flag { width: 32px; height: 22px; margin-left: 30px; }
  .clock { width: 165px; margin-left: 39px; }
  .search { width: 30px; height: 28px; margin-left: 44px; fill: none; stroke: #1c2730; stroke-width: 2.8; }
  .list { width: 37px; height: 20px; margin-left: 30px; }

  .window { height: 1666px; flex: none; display: flex; flex-direction: column; border-radius: 9px; overflow: hidden; }
  .tabstrip { height: 73px; flex: none; box-sizing: border-box; display: flex; align-items: flex-end; border-top: 1px solid #a9bec5; background: linear-gradient(#70939f 0, #6b8f9c 18%, #4a778a 70%, #467587 100%); border-bottom: 1px solid #a3b7be; color: #fff; font-size: 24px; font-weight: 500; }
  .lights { display: flex; gap: 16px; margin-left: 24px; align-self: center; padding-top: 3px; }
  .lights i { width: 24px; height: 24px; border-radius: 50%; box-sizing: border-box; }
  .red { background: #ff605a; border: 1px solid #dc4740; }
  .yellow { background: #ffc043; border: 1px solid #dd9d2c; }
  .green { background: #33cb49; border: 1px solid #24a535; }
  .tab { width: 484px; height: 57px; margin: 0 0 -1px 16px; display: flex; align-items: center; position: relative; }
  .tabshape { position: absolute; inset: 0; width: 484px; height: 57px; }
  .tabdoc { position: relative; width: 20px; height: 28px; margin: 2px 0 0 38px; }
  .tabdoc, .smalldoc { fill: none; stroke: #d3d9dc; stroke-width: 2.2; }
  .tabtitle { position: relative; margin-left: 18px; width: 302px; line-height: 56px; padding-top: 2px; }
  .close { position: relative; width: 14px; height: 14px; margin: 2px 0 0 57px; stroke: #cfd5d8; stroke-width: 2; }
  .newtab { width: 66px; height: 32px; margin: 0 0 8px -6px; }
  .profile { margin-left: auto; padding-right: 22px; line-height: 66px; }

  .toolbar { height: 121px; flex: none; box-sizing: border-box; border-bottom: 1px solid #2d4d5a; background: linear-gradient(#7e929a, #657d87 50%, #486770); }
  .navrow { display: flex; align-items: center; height: 53px; padding-top: 10px; }
  .nav { width: 26px; height: 26px; margin-left: 23px; fill: none; stroke: #e4e8ea; stroke-width: 3.2; }
  .nav.dim { margin-left: 30px; stroke: #8d9da4; }
  .reload { width: 28px; height: 28px; margin-left: 29px; }
  .omnibox { width: 2406px; height: 54px; box-sizing: border-box; flex: none; margin-left: 23px; border: 1px solid #a9b2b3; border-radius: 6px; background: #fff; display: flex; align-items: center; font-size: 28px; line-height: 52px; color: #000; }
  .info { width: 28px; height: 28px; margin: 1px 0 0 12.500px; fill: none; stroke: #5d6165; stroke-width: 2.8; }
  .url { margin-left: 11.500px; padding-top: 2px; display: flex; }
  .path { color: #808080; }
  .star { width: 30px; height: 29px; margin: -1px 13px 0 auto; fill: none; stroke: #75787d; stroke-width: 2.8; }
  .camera { width: 30px; height: 28px; margin: 1px 0 0 22px; }
  .ext { width: 32px; height: 32px; margin-left: 25px; }
  .ext + .ext { margin-left: 24px; }
  .balloon { width: 32px; height: 32px; margin-left: 24px; }
  .dots { width: 6px; height: 26px; margin-left: 29px; fill: #e0e5e7; }

  .bookmarks { display: flex; align-items: center; height: 57px; padding-left: 24px; color: #fff; font-size: 24px; font-weight: 500; }
  .bookmark { display: flex; align-items: center; gap: 8px; flex: none; }
  .bookmark > span { padding-top: 2px; }
  .bookmark > svg, .docbox { width: 32px; height: 32px; flex: none; }
  .docbox { display: flex; align-items: center; justify-content: center; }
  .smalldoc { width: 17px; height: 24px; stroke-width: 2.4; }
  .more { width: 14px; height: 12px; margin-left: 103px; fill: none; stroke: #e4eaec; stroke-width: 2.2; }

  .page { flex: 1; background: #c6c6c6; font-family: "Liberation Sans", Arial, sans-serif; }
  .pagehead { height: 118px; box-sizing: border-box; background: #00167b; display: flex; justify-content: space-between; padding: 0 318px; }
  h1 { margin: 0; font-size: 75px; font-weight: 400; line-height: 122px; color: #fff; -webkit-text-stroke: 2px #fff; }
  button { width: 140px; height: 68px; margin: 20px 0 0; padding: 0; border: 2px solid #357ebd; border-radius: 8px; background: #478cc9; color: #fff; font: 29px/64px "Liberation Sans", Arial, sans-serif; -webkit-text-stroke: .5px #fff; }
  .panel { width: 2304px; height: 624px; box-sizing: border-box; margin: 40px auto 0; padding: 20px 0; border: 2px solid #000; background: #fff; display: flex; color: #333; font-size: 36px; }
  .left { width: 576px; box-sizing: border-box; border-right: 2px solid #000; padding-left: 30px; }
  .right { flex: 1; padding-left: 29px; }
  .row { display: block; height: 52px; line-height: 52px; }
  .left h2 + .row, .right h2 + .row { margin-top: 18px; }
  .item { display: flex; gap: 10px; }
  .item a, .item em { flex: none; white-space: pre; }
  a { color: #ff5733; }
  em { color: #a9a9a9; }
  h2 { margin: 41px 0 18px; font-size: 48px; line-height: 53px; font-weight: 700; letter-spacing: .3px; }
  .right h2 { margin-top: 39px; }

  .desktop { height: 88px; flex: none; display: flex; }
  .sky { width: 578px; height: 88px; }
  .skyleft { background: linear-gradient(rgba(8, 22, 34, .9), rgba(8, 22, 34, 0)), linear-gradient(90deg, #1a4260, #12304a 50%, #233d55); }
  .skyright { background: linear-gradient(#040609, rgba(4, 6, 9, 0)), linear-gradient(90deg, #0b1220, #070b10 50%, #050914); }
  .dock { position: relative; width: 1724px; box-sizing: border-box; padding: 5px 6px 0; border-radius: 10px 10px 0 0; display: flex; background: linear-gradient(90deg, #5b748b, #547088 25%, #50667e 55%, #4d5e70 75%, #545761 92%, #545863); box-shadow: 0 0 90px rgba(0, 0, 0, .22), 0 0 5px rgba(0, 0, 0, .18); }
  .ic { width: 70px; height: 72px; overflow: visible; filter: drop-shadow(0 1px 1px rgba(0, 0, 0, .25)); }
  .run { background: radial-gradient(circle at 50% 50%, #000 0 4px, transparent 5px) no-repeat; background-size: 12px 12px; background-position: 28px 69px; padding-bottom: 11px; }
  .divider { width: 32px; height: 64px; margin-top: 7px; background: linear-gradient(#32414f, #32414f) no-repeat 16px 0 / 2px 64px; }
  .petals rect { mix-blend-mode: multiply; }
  .petals { isolation: isolate; }
  .lbl { font-family: Inter, sans-serif; }
  .thin { font-family: Inter, sans-serif; font-weight: 300; }
</style>
